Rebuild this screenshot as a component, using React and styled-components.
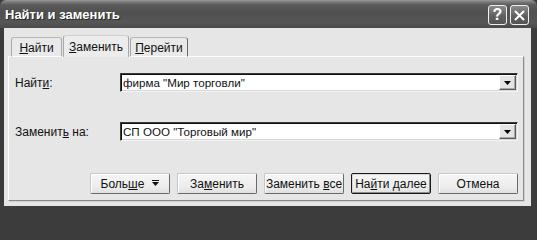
import React from "react";
import styled, { createGlobalStyle } from "styled-components";

const Global = createGlobalStyle`
  html, body { margin: 0; padding: 0; background: #3c3c3c; }
  body { font-family: "Liberation Sans", Arial, sans-serif; font-size: 12px; color: #111; }
`;

const Window = styled.div`
  width: 537px;
  height: 211px;
  background: #3c3c3c;
  display: flex;
  flex-direction: column;
  border-radius: 6px 6px 0 0;
  overflow: hidden;
`;

const TitleBar = styled.div`
  height: 28px;
  flex: none;
  display: flex;
  align-items: center;
  justify-content: space-between;
  padding: 0 8px 0 5px;
  background: linear-gradient(#9a9a9a 0, #7a7a7a 2px, #5a5a5a 5px, #505050 45%, #565656 80%, #4a4a4a 100%);
`;

const Title = styled.span`
  font-family: "Liberation Sans", Arial, sans-serif;
  font-weight: bold;
  font-size: 13px;
  color: #fff;
  text-shadow: 1px 1px 0 #2a2a2a;
  padding-top: 1px;
`;

const TitleButtons = styled.div`
  display: flex;
  gap: 3px;
  padding-top: 2px;
`;

const CapButton = styled.div`
  width: 17px;
  height: 18px;
  border: 1px solid #f0f0f0;
  border-radius: 3px;
  background: linear-gradient(#8a8a8a, #5e5e5e 60%, #555);
  display: flex;
  align-items: center;
  justify-content: center;
  color: #fff;
  font-family: "Liberation Sans", Arial, sans-serif;
  font-weight: bold;
  font-size: 16px;
  line-height: 1;
`;

const Body = styled.div`
  flex: 1;
  margin: 0 6px 5px 4px;
  background: #e6e6e6;
  display: flex;
  flex-direction: column;
  padding: 7px 7px 5px 4px;
`;

const TabStrip = styled.div`
  display: flex;
  align-items: flex-end;
  height: 22px;
  padding-left: 3px;
  position: relative;
  z-index: 1;
  margin-bottom: -1px;
`;

const Tab = styled.div`
  width: ${(p) => p.$w}px;
  height: ${(p) => (p.$active ? 22 : 20)}px;
  box-sizing: border-box;
  display: flex;
  align-items: center;
  justify-content: center;
  background: ${(p) => (p.$active ? "#ececec" : "#e9e9e9")};
  border: 1px solid #a8a8a8;
  border-right-color: ${(p) => (p.$dark ? "#6a6a6a" : "#a8a8a8")};
  border-bottom: ${(p) => (p.$active ? "none" : "1px solid #fff")};
  border-top-color: ${(p) => (p.$active ? "#d0d0d0" : "#b8b8b8")};
  border-radius: 3px 3px 0 0;
  padding-top: ${(p) => (p.$active ? 0 : 1)}px;
  margin-right: 1px;
  font-size: 12px;
`;

const Panel = styled.div`
  flex: 1;
  border: 1px solid #fff;
  border-right-color: #8a8a8a;
  border-bottom-color: #8a8a8a;
  box-shadow: 1px 1px 0 #d0d0d0;
  display: flex;
  flex-direction: column;
  padding: 16px 5px 6px 6px;
`;

const FieldRow = styled.div`
  display: flex;
  align-items: center;
  height: 19px;
  margin-bottom: ${(p) => p.$mb || 0}px;
`;

const Label = styled.label`
  width: 105px;
  flex: none;
  font-size: 12px;
`;

const Combo = styled.div`
  flex: 1;
  height: 19px;
  box-sizing: border-box;
  background: #fff;
  border: 1px solid;
  border-color: #3a3a3a #f4f4f4 #f4f4f4 #3a3a3a;
  box-shadow: inset 1px 1px 0 #111, inset -1px -1px 0 #d8d8d8;
  display: flex;
  align-items: center;
  padding: 0 1px 0 2px;
`;

const ComboText = styled.span`
  flex: 1;
  font-size: 11.6px;
  white-space: nowrap;
`;

const DropButton = styled.div`
  width: 17px;
  height: 15px;
  box-sizing: border-box;
  background: #e4e4e4;
  border: 1px solid;
  border-color: #fff #5a5a5a #5a5a5a #fff;
  box-shadow: inset -1px -1px 0 #a8a8a8;
  display: flex;
  align-items: center;
  justify-content: center;
`;

const Spacer = styled.div`
  flex: 1;
`;

const ButtonRow = styled.div`
  display: flex;
  justify-content: flex-end;
  gap: 7px;
`;

const Button = styled.div`
  width: 80px;
  height: 21px;
  box-sizing: border-box;
  display: flex;
  align-items: center;
  justify-content: center;
  gap: 8px;
  font-size: 12px;
  border-radius: 2px;
  background: linear-gradient(#f6f6f6, #ececec 70%, #e0e0e0);
  border: 1px solid;
  border-color: ${(p) => (p.$def ? "#1a1a1a" : "#c8c8c8 #6a6a6a #6a6a6a #c8c8c8")};
  box-shadow: ${(p) =>
    p.$def ? "inset 1px 1px 0 #d8d8d8, inset -1px -1px 0 #8a8a8a" : "inset 1px 1px 0 #fff"};
`;

const U = styled.span`
  text-decoration: underline;
`;

const Arrow = () => (
  <svg width="7" height="7" viewBox="0 0 7 7">
    <rect x="0" y="0" width="7" height="1" fill="#111" />
    <polygon points="0,2 7,2 3.5,6" fill="#111" />
  </svg>
);

const Tri = () => (
  <svg width="7" height="4" viewBox="0 0 7 4">
    <polygon points="0,0 7,0 3.5,4" fill="#000" />
  </svg>
);

export default function App() {
  return (
    <>
      <Global />
      <Window>
        <TitleBar>
          <Title>Найти и заменить</Title>
          <TitleButtons>
            <CapButton>?</CapButton>
            <CapButton>
              <svg width="11" height="11" viewBox="0 0 11 11">
                <path d="M1 1 L10 10 M10 1 L1 10" stroke="#fff" strokeWidth="2" />
              </svg>
            </CapButton>
          </TitleButtons>
        </TitleBar>
        <Body>
          <TabStrip>
            <Tab $w={51}><span><U>Н</U>айти</span></Tab>
            <Tab $w={66} $active><span><U>З</U>аменить</span></Tab>
            <Tab $w={58} $dark><span><U>П</U>ерейти</span></Tab>
          </TabStrip>
          <Panel>
            <FieldRow $mb={30}>
              <Label>Найт<U>и</U>:</Label>
              <Combo>
                <ComboText>фирма "Мир торговли"</ComboText>
                <DropButton><Tri /></DropButton>
              </Combo>
            </FieldRow>
            <FieldRow>
              <Label>Заменит<U>ь</U> на:</Label>
              <Combo>
                <ComboText>СП ООО "Торговый мир"</ComboText>
                <DropButton><Tri /></DropButton>
              </Combo>
            </FieldRow>
            <Spacer />
            <ButtonRow>
              <Button><span>Боль<U>ш</U>е</span><Arrow /></Button>
              <Button><span>За<U>м</U>енить</span></Button>
              <Button><span>Заменить <U>в</U>се</span></Button>
              <Button $def><span>На<U>й</U>ти далее</span></Button>
              <Button><span>Отмена</span></Button>
            </ButtonRow>
          </Panel>
        </Body>
      </Window>
    </>
  );
}
